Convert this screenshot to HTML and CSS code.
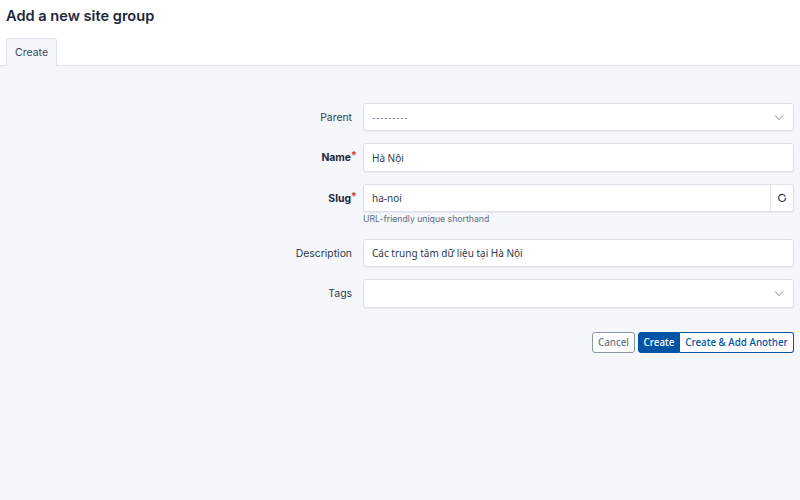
FILE: index.html
```html
<!DOCTYPE html>
<html lang="en">
<head>
    <meta charset="UTF-8">
    <meta name="viewport" content="width=device-width, initial-scale=1.0">
    <title>Add a new site group</title>
    <link rel="stylesheet" href="styles.css">
</head>
<body>
    <div class="page-header">
        <h1>Add a new site group</h1>
        <div class="tabs">
            <a class="tab" href="#">Create</a>
        </div>
    </div>

    <form class="site-form">
        <div class="form-row">
            <label class="form-label">Parent</label>
            <div class="field">
                <div class="control select">
                    <span class="placeholder">---------</span>
                    <svg class="chevron" viewBox="0 0 12 8" width="10" height="7"><path d="M1 1.5l5 5 5-5" fill="none" stroke="currentColor" stroke-width="1.2"/></svg>
                </div>
            </div>
        </div>
        <div class="form-row">
            <label class="form-label required">Name</label>
            <div class="field">
                <div class="control">Hà Nội</div>
            </div>
        </div>
        <div class="form-row row-hint">
            <label class="form-label required">Slug</label>
            <div class="field">
                <div class="control slug">
                    <span class="slug-value">ha-noi</span>
                    <span class="slug-btn">
                        <svg viewBox="0 0 12 12" width="10" height="10"><path d="M10 4.2A4.2 4.2 0 1 0 10.2 7" fill="none" stroke="#1f2d3d" stroke-width="1.3"/><path d="M11 5v2.4H8.8z" fill="#0a58a8"/></svg>
                    </span>
                </div>
                <div class="hint">URL-friendly unique shorthand</div>
            </div>
        </div>
        <div class="form-row">
            <label class="form-label">Description</label>
            <div class="field">
                <div class="control">Các trung tâm dữ liệu tại Hà Nội</div>
            </div>
        </div>
        <div class="form-row">
            <label class="form-label">Tags</label>
            <div class="field">
                <div class="control select tall">
                    <span></span>
                    <svg class="chevron" viewBox="0 0 12 8" width="10" height="7"><path d="M1 1.5l5 5 5-5" fill="none" stroke="currentColor" stroke-width="1.2"/></svg>
                </div>
            </div>
        </div>

        <div class="form-actions">
            <a class="btn btn-cancel" href="#">Cancel</a>
            <div class="btn-group">
                <a class="btn btn-primary" href="#">Create</a>
                <a class="btn btn-outline" href="#">Create &amp; Add Another</a>
            </div>
        </div>
    </form>
</body>
</html>
```

FILE: styles.css
```css
* {
    margin: 0;
    padding: 0;
    box-sizing: border-box;
}

body {
    font-family: Inter, 'Liberation Sans', sans-serif;
    font-size: 10.5px;
    color: #1d273b;
    background: #f5f7fb;
    height: 500px;
    overflow: hidden;
}

.page-header {
    background: white;
    height: 66px;
    border-bottom: 1px solid #dfe3ec;
    padding: 7px 6px 0;
    display: flex;
    flex-direction: column;
    justify-content: space-between;
}

h1 {
    font-size: 14.6px;
    font-weight: 600;
    line-height: 18px;
}

.tabs {
    display: flex;
    margin-bottom: -1px;
}

.tab {
    width: 51px;
    height: 28px;
    background: #f5f7fb;
    border: 1px solid #dfe3ec;
    border-bottom: none;
    border-radius: 3px 3px 0 0;
    display: flex;
    align-items: center;
    justify-content: center;
    color: #3a4859;
    text-decoration: none;
    font-size: 10.5px;
}

.site-form {
    padding: 36.8px 6px 0 0;
}

.form-row {
    display: flex;
    margin-bottom: 12px;
}

.row-hint {
    margin-bottom: 12.5px;
}

.form-label {
    width: 352px;
    height: 28.5px;
    text-align: right;
    line-height: 29.5px;
    color: #2c3a4d;
    font-size: 10.4px;
}

.required {
    font-weight: 700;
    color: #1d273b;
    padding-right: 1px;
    position: relative;
}

.required::after {
    content: "*";
    color: #d63939;
    position: absolute;
    right: -5px;
    top: -2px;
    font-size: 11px;
}

.field {
    margin-left: 11px;
    width: 431px;
}

.control {
    height: 28.5px;
    background: white;
    border: 1px solid #dde1ea;
    border-radius: 3px;
    padding: 0 8px;
    display: flex;
    align-items: center;
    justify-content: space-between;
    font-family: 'Noto Sans', sans-serif;
    font-size: 10px;
    color: #2c3a4d;
    box-shadow: 0 1px 1px rgba(30, 40, 60, 0.06);
}

.tall {
    height: 29px;
}

.placeholder {
    color: #7a8699;
    letter-spacing: 0.8px;
}

.chevron {
    color: #7a8699;
    margin-right: 1px;
}

.slug {
    padding: 0 0 0 8px;
}

.slug-btn {
    width: 23px;
    height: 100%;
    border-left: 1px solid #e6e9f0;
    display: flex;
    align-items: center;
    justify-content: center;
}

.hint {
    font-size: 8.7px;
    color: #5f6d7f;
    line-height: 13px;
    margin-top: 1px;
}

.form-actions {
    display: flex;
    justify-content: flex-end;
    gap: 3px;
    margin-top: 24px;
}

.btn {
    height: 21px;
    display: flex;
    align-items: center;
    justify-content: center;
    font-family: 'Noto Sans', sans-serif;
    font-size: 9.8px;
    font-weight: 500;
    text-decoration: none;
    white-space: nowrap;
}

.btn-cancel {
    width: 43px;
    background: white;
    color: #6b7686;
    border: 1px solid #8a96a6;
    border-radius: 3px;
}

.btn-group {
    display: flex;
}

.btn-primary {
    background: #0054a6;
    color: white;
    border: 1px solid #0054a6;
    border-radius: 3px 0 0 3px;
    width: 42px;
}

.btn-outline {
    background: white;
    color: #0054a6;
    border: 1px solid #0054a6;
    border-left: none;
    border-radius: 0 3px 3px 0;
    width: 114px;
}
```
